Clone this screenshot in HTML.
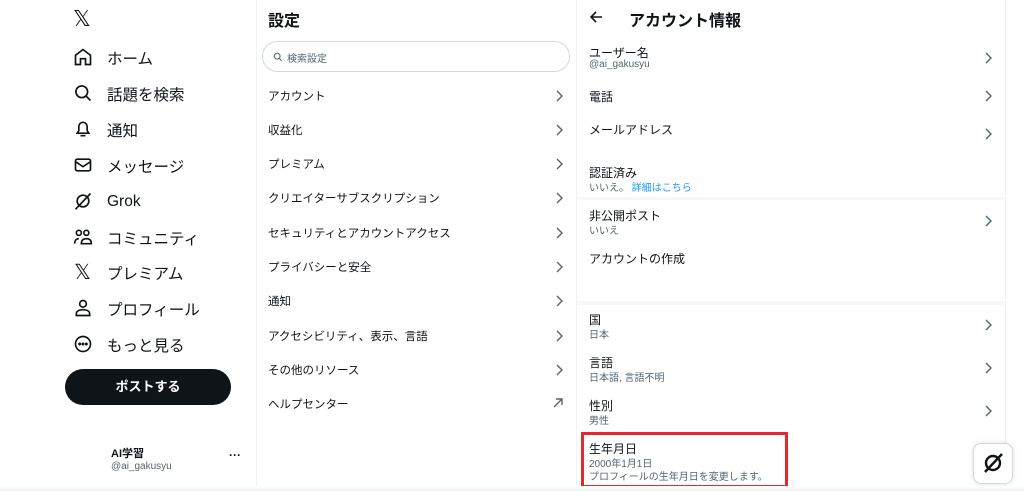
<!DOCTYPE html><html><head><meta charset="utf-8"><style>
*{margin:0;padding:0;box-sizing:border-box}
body{width:1024px;height:491px;overflow:hidden;background:#fff;font-family:"Liberation Sans","Noto Sans CJK JP",sans-serif;color:#0f1419;position:relative}
.a{position:absolute;white-space:nowrap}
.nav{font-size:15.5px}
.ic{position:absolute;left:73px;width:20px;height:20px}
.mid{font-size:11.5px}
.chev{position:absolute;width:8px;height:12px}
.lbl{font-size:12px}
.sub{font-size:10px;color:#536471}
.vl{position:absolute;top:0;bottom:0;width:1px;background:#eff3f4}
</style></head><body>
<div class="vl" style="left:256px"></div>
<div class="vl" style="left:576px"></div>
<div class="vl" style="left:1005px"></div>
<!-- left nav -->
<div class="a" style="left:73px;top:6px;font-size:22px;font-weight:400">𝕏</div>
<svg class="ic" style="top:47px" viewBox="0 0 24 24" fill="none" stroke="#0f1419" stroke-width="2"><path d="M3 10l9-7 9 7v11h-6v-7h-6v7H3z"/></svg>
<div class="a nav" style="left:107px;top:47px">ホーム</div>
<svg class="ic" style="top:83px" viewBox="0 0 24 24" fill="none" stroke="#0f1419" stroke-width="2"><circle cx="10.5" cy="10.5" r="7"/><path d="M16 16l5 5"/></svg>
<div class="a nav" style="left:107px;top:83px">話題を検索</div>
<svg class="ic" style="top:119px" viewBox="0 0 24 24" fill="none" stroke="#0f1419" stroke-width="2"><path d="M5 17h14l-2-3v-5a5 5 0 0 0-10 0v5z M9 20h6"/></svg>
<div class="a nav" style="left:107px;top:119px">通知</div>
<svg class="ic" style="top:155px" viewBox="0 0 24 24" fill="none" stroke="#0f1419" stroke-width="2"><rect x="3" y="5" width="18" height="14" rx="2"/><path d="M3 8l9 6 9-6"/></svg>
<div class="a nav" style="left:107px;top:155px">メッセージ</div>
<svg class="ic" style="top:191px" viewBox="0 0 24 24" fill="none" stroke="#0f1419" stroke-width="2"><circle cx="12" cy="12" r="7"/><path d="M3 22L21 3"/></svg>
<div class="a nav" style="left:107px;top:193px">Grok</div>
<svg class="ic" style="top:227px" viewBox="0 0 24 24" fill="none" stroke="#0f1419" stroke-width="2"><circle cx="7" cy="7" r="3"/><circle cx="16" cy="7" r="3"/><path d="M2 20c0-4 2-6 5-6M10 20c0-4 2-6 6-6s6 2 6 6z"/></svg>
<div class="a nav" style="left:107px;top:227px">コミュニティ</div>
<div class="a" style="left:74px;top:260px;font-size:21px">𝕏</div>
<div class="a nav" style="left:107px;top:262px">プレミアム</div>
<svg class="ic" style="top:298px" viewBox="0 0 24 24" fill="none" stroke="#0f1419" stroke-width="2"><circle cx="12" cy="7" r="4"/><path d="M4 21v-2c0-3 3-5 8-5s8 2 8 5v2z"/></svg>
<div class="a nav" style="left:107px;top:298px">プロフィール</div>
<svg class="ic" style="top:334px" viewBox="0 0 24 24" fill="none" stroke="#0f1419" stroke-width="2"><circle cx="12" cy="12" r="9"/><circle cx="8" cy="12" r=".8" fill="#0f1419"/><circle cx="12" cy="12" r=".8" fill="#0f1419"/><circle cx="16" cy="12" r=".8" fill="#0f1419"/></svg>
<div class="a nav" style="left:107px;top:334px">もっと見る</div>
<div class="a" style="left:65px;top:369px;width:166px;height:36px;border-radius:18px;background:#0f1419;color:#fff;font-weight:bold;font-size:13px;text-align:center;line-height:36px">ポストする</div>
<div class="a" style="left:111px;top:445px;font-size:11px;font-weight:bold">AI学習</div>
<div class="a" style="left:111px;top:461px;font-size:10px;color:#536471">@ai_gakusyu</div>
<div class="a" style="left:229px;top:448px;font-size:12px;font-weight:bold">···</div>
<!-- middle -->
<div class="a" style="left:268px;top:7px;font-size:16px;font-weight:bold">設定</div>
<div class="a" style="left:262px;top:41px;width:308px;height:31px;border:1px solid #cfd9de;border-radius:16px"></div>
<svg class="a" style="left:273px;top:52px;width:10px;height:10px" viewBox="0 0 24 24" fill="none" stroke="#536471" stroke-width="2.5"><circle cx="10" cy="10" r="7"/><path d="M15 15l6 6"/></svg>
<div class="a" style="left:287px;top:50px;font-size:10px;color:#536471">検索設定</div>
<div class="mid">
<div class="a" style="left:268px;top:88px">アカウント</div>
<div class="a" style="left:268px;top:122px">収益化</div>
<div class="a" style="left:268px;top:156px">プレミアム</div>
<div class="a" style="left:268px;top:190px">クリエイターサブスクリプション</div>
<div class="a" style="left:268px;top:225px">セキュリティとアカウントアクセス</div>
<div class="a" style="left:268px;top:259px">プライバシーと安全</div>
<div class="a" style="left:268px;top:293px">通知</div>
<div class="a" style="left:268px;top:328px">アクセシビリティ、表示、言語</div>
<div class="a" style="left:268px;top:362px">その他のリソース</div>
<div class="a" style="left:268px;top:396px">ヘルプセンター</div>
</div>
<svg class="chev" style="left:555px;top:90px" viewBox="0 0 8 12" fill="none" stroke="#536471" stroke-width="1.4"><path d="M2 1l5 5-5 5"/></svg>
<svg class="chev" style="left:555px;top:124px" viewBox="0 0 8 12" fill="none" stroke="#536471" stroke-width="1.4"><path d="M2 1l5 5-5 5"/></svg>
<svg class="chev" style="left:555px;top:158px" viewBox="0 0 8 12" fill="none" stroke="#536471" stroke-width="1.4"><path d="M2 1l5 5-5 5"/></svg>
<svg class="chev" style="left:555px;top:192px" viewBox="0 0 8 12" fill="none" stroke="#536471" stroke-width="1.4"><path d="M2 1l5 5-5 5"/></svg>
<svg class="chev" style="left:555px;top:227px" viewBox="0 0 8 12" fill="none" stroke="#536471" stroke-width="1.4"><path d="M2 1l5 5-5 5"/></svg>
<svg class="chev" style="left:555px;top:261px" viewBox="0 0 8 12" fill="none" stroke="#536471" stroke-width="1.4"><path d="M2 1l5 5-5 5"/></svg>
<svg class="chev" style="left:555px;top:295px" viewBox="0 0 8 12" fill="none" stroke="#536471" stroke-width="1.4"><path d="M2 1l5 5-5 5"/></svg>
<svg class="chev" style="left:555px;top:330px" viewBox="0 0 8 12" fill="none" stroke="#536471" stroke-width="1.4"><path d="M2 1l5 5-5 5"/></svg>
<svg class="chev" style="left:555px;top:364px" viewBox="0 0 8 12" fill="none" stroke="#536471" stroke-width="1.4"><path d="M2 1l5 5-5 5"/></svg>
<svg class="a" style="left:553px;top:398px;width:10px;height:10px" viewBox="0 0 10 10" fill="none" stroke="#536471" stroke-width="1.4"><path d="M1 9l8-8M3 1h6v6"/></svg>
<!-- right -->
<svg class="a" style="left:590px;top:11px;width:13px;height:12px" viewBox="0 0 13 12" fill="none" stroke="#0f1419" stroke-width="1.6"><path d="M12 6H2M6 1L1 6l5 5"/></svg>
<div class="a" style="left:629px;top:7px;font-size:16px;font-weight:bold">アカウント情報</div>
<div class="a" style="left:577px;top:197px;width:428px;height:3px;background:#f7f9f9"></div>
<div class="a" style="left:577px;top:301px;width:428px;height:4px;background:#f7f9f9"></div>
<div class="a lbl" style="left:589px;top:44px">ユーザー名</div><div class="a sub" style="left:589px;top:59px">@ai_gakusyu</div>
<div class="a lbl" style="left:589px;top:88px">電話</div>
<div class="a lbl" style="left:589px;top:121px">メールアドレス</div>
<div class="a lbl" style="left:589px;top:164px">認証済み</div><div class="a sub" style="left:589px;top:179px">いいえ。 <span style="color:#1d9bf0">詳細はこちら</span></div>
<div class="a lbl" style="left:589px;top:207px">非公開ポスト</div><div class="a sub" style="left:589px;top:222px">いいえ</div>
<div class="a lbl" style="left:589px;top:250px">アカウントの作成</div>
<div class="a lbl" style="left:589px;top:311px">国</div><div class="a sub" style="left:589px;top:326px">日本</div>
<div class="a lbl" style="left:589px;top:354px">言語</div><div class="a sub" style="left:589px;top:369px">日本語, 言語不明</div>
<div class="a lbl" style="left:589px;top:397px">性別</div><div class="a sub" style="left:589px;top:412px">男性</div>
<div class="a lbl" style="left:589px;top:440px">生年月日</div><div class="a sub" style="left:589px;top:455px">2000年1月1日</div><div class="a sub" style="left:589px;top:468px">プロフィールの生年月日を変更します。</div>
<div class="a" style="left:581px;top:432px;width:207px;height:56px;border:3px solid #e8262e"></div>
<svg class="chev" style="left:984px;top:52px" viewBox="0 0 8 12" fill="none" stroke="#536471" stroke-width="1.4"><path d="M2 1l5 5-5 5"/></svg>
<svg class="chev" style="left:984px;top:90px" viewBox="0 0 8 12" fill="none" stroke="#536471" stroke-width="1.4"><path d="M2 1l5 5-5 5"/></svg>
<svg class="chev" style="left:984px;top:128px" viewBox="0 0 8 12" fill="none" stroke="#536471" stroke-width="1.4"><path d="M2 1l5 5-5 5"/></svg>
<svg class="chev" style="left:984px;top:215px" viewBox="0 0 8 12" fill="none" stroke="#536471" stroke-width="1.4"><path d="M2 1l5 5-5 5"/></svg>
<svg class="chev" style="left:984px;top:319px" viewBox="0 0 8 12" fill="none" stroke="#536471" stroke-width="1.4"><path d="M2 1l5 5-5 5"/></svg>
<svg class="chev" style="left:984px;top:362px" viewBox="0 0 8 12" fill="none" stroke="#536471" stroke-width="1.4"><path d="M2 1l5 5-5 5"/></svg>
<svg class="chev" style="left:984px;top:405px" viewBox="0 0 8 12" fill="none" stroke="#536471" stroke-width="1.4"><path d="M2 1l5 5-5 5"/></svg>
<div class="a" style="left:973px;top:443px;width:40px;height:41px;border:1px solid #cfd9de;border-radius:8px;background:#fff;box-shadow:0 0 6px rgba(0,0,0,.12)"></div>
<svg class="a" style="left:981px;top:451px;width:24px;height:24px" viewBox="0 0 24 24" fill="none" stroke="#0f1419" stroke-width="2.4"><circle cx="12" cy="12" r="7"/><path d="M4 21L21 3"/></svg>
<div class="a" style="left:0;top:486px;width:1024px;height:5px;background:linear-gradient(#fff,#eef0f1)"></div>
</body></html>
